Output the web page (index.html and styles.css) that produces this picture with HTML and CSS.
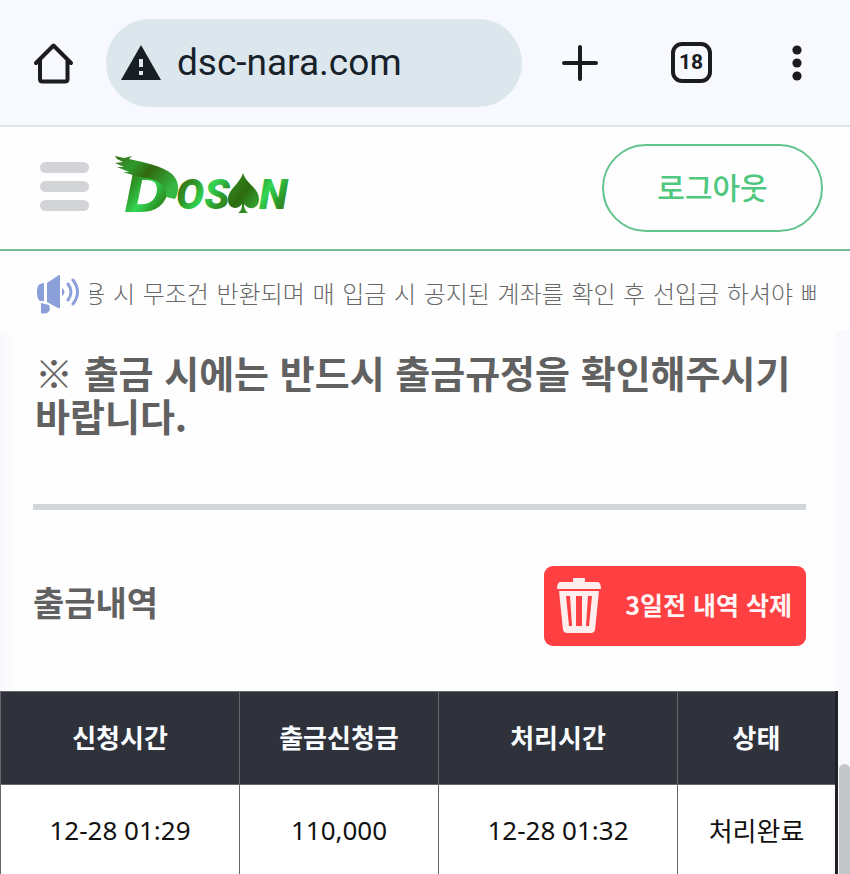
FILE: index.html
```html
<!DOCTYPE html>
<html lang="ko">
  <head>
    <meta charset="utf-8">
    <meta name="viewport" content="width=device-width, initial-scale=1">
    <title>DOSAN</title>
    <link rel="stylesheet" href="styles.css">
  </head>
  <body>
    <div class="browser-bar">
      <button class="home-button" aria-label="Home">
        <svg width="42" height="42" viewBox="0 0 42 42" fill="none" stroke="#1b1c20" stroke-width="4" stroke-linecap="round" stroke-linejoin="round">
          <path d="M4 21 21.500 3.500 39 21M8 18V37q0 2.500 2.500 2.500H33q2.500 0 2.500-2.500V18" />
        </svg>
      </button>
      <div class="address">
        <svg width="40" height="36" viewBox="0 0 40 36">
          <path fill="#171e24" d="M20 0 40 35H0z" />
          <path fill="#dce7ed" d="M18 14h4v8h-4zM18 26h4v4h-4z" />
        </svg>
        <span>dsc-nara.com</span>
      </div>
      <button class="new-tab" aria-label="New tab">
        <svg width="36" height="36" viewBox="0 0 36 36" stroke="#1b1c20" stroke-width="4" stroke-linecap="round">
          <path d="M18 2v32M2 18h32" />
        </svg>
      </button>
      <button class="tabs" aria-label="Tabs"><span class="tab-count">18</span></button>
      <button class="more" aria-label="More">
        <svg width="10" height="36" viewBox="0 0 10 36" fill="#1b1c20">
          <circle cx="5" cy="5" r="4.600" />
          <circle cx="5" cy="18" r="4.600" />
          <circle cx="5" cy="31" r="4.600" />
        </svg>
      </button>
    </div>

    <header class="site-header">
      <button class="menu-button" aria-label="Menu">
        <i></i>
        <i></i>
        <i></i>
      </button>
      <a class="logo" href="#" aria-label="DOSAN">
        <svg width="178" height="62" viewBox="0 0 178 62">
          <defs>
            <linearGradient id="leaf" gradientUnits="userSpaceOnUse" x1="0" y1="0" x2="20" y2="14" spreadMethod="reflect">
              <stop offset="0" stop-color="#34d653" />
              <stop offset="0.6" stop-color="#2c9a2a" />
              <stop offset="1" stop-color="#3a7a18" />
            </linearGradient>
            <linearGradient id="brush" x1="0" y1="0" x2="1" y2="0.6">
              <stop offset="0" stop-color="#3d6f1c" />
              <stop offset="0.3" stop-color="#2f9a2c" />
              <stop offset="0.55" stop-color="#33690f" />
              <stop offset="1" stop-color="#34b843" />
            </linearGradient>
            <linearGradient id="spade" x1="0" y1="0" x2="1" y2="1">
              <stop offset="0" stop-color="#39961f" />
              <stop offset="0.5" stop-color="#2c6a10" />
              <stop offset="1" stop-color="#36b53b" />
            </linearGradient>
          </defs>
          <g fill="url(#leaf)">
            <text class="logo-initial" x="10" y="57">D</text>
            <text class="logo-text" x="62" y="54">OS</text>
            <text class="logo-text" x="145" y="54">N</text>
          </g>
          <!-- brush stroke over the initial -->
          <path fill="url(#brush)" d="M1 1 10 3 18 1 15 4C29 7 49 11 58 19 65 26 66 35 61 44L52 42C53 33 47 27 37 24 27 22 17 20 9 17L15 17 3 12 10 12 1 8 9 7 3 4z" />
          <path fill="url(#spade)" d="M129 18C133 30 145 33 145 44 145 54 135 56 130 49 130 54 132 56 134 58H124C127 56 128 54 128 49 123 56 114 53 114 45 114 34 125 30 129 18z" />
        </svg>
      </a>
      <button class="logout"><span>로그아웃</span></button>
    </header>

    <div class="notice-bar">
      <svg width="44" height="40" viewBox="0 0 44 40" fill="#8b9fd9">
        <path d="M23 0Q24 0 24 1V32Q24 34 22 33L11 27V8zM8 8V26H4Q1 24 1 17T4 9zM5 28 13 30 14 35Q11 40 5 38z" />
        <path d="M26 13Q31 17 26 21z" />
        <path d="M32 9Q38 17 32 25M37 5Q46 17 37 29" fill="none" stroke="#8b9fd9" stroke-width="3" stroke-linecap="round" />
      </svg>
      <div class="notice-track">
        <span>용 시 무조건 반환되며 매 입금 시 공지된 계좌를 확인 후 선입금 하셔야 빠</span>
      </div>
    </div>

    <main class="content">
      <p class="warning">※ 출금 시에는 반드시 출금규정을 확인해주시기 바랍니다.</p>

      <div class="history-head">
        <h2>출금내역</h2>
        <button class="delete-button">
          <svg width="46" height="56" viewBox="0 0 46 56" fill="#ffeeee">
            <path d="M17 4V1Q17 0 18 0H28Q29 0 29 1V4H42Q45 5 45 11H1Q1 5 4 4z" />
            <path fill-rule="evenodd" d="M3 13H43L39 52Q38 55 35 55H11Q8 55 7 52zM10 18 13 48H16L14 18zM20 18V48H26V18zM32 18 30 48H33L36 18z" />
          </svg>
          <span>3일전 내역 삭제</span>
        </button>
      </div>

      <table class="history">
        <thead>
          <tr>
            <th class="col-time">신청시간</th>
            <th class="col-amount">출금신청금</th>
            <th class="col-time">처리시간</th>
            <th>상태</th>
          </tr>
        </thead>
        <tbody>
          <tr>
            <td>12-28 01:29</td>
            <td>110,000</td>
            <td>12-28 01:32</td>
            <td>처리완료</td>
          </tr>
        </tbody>
      </table>
    </main>
    <div class="scroll-thumb"></div>
  </body>
</html>
```

FILE: styles.css
```css
* {
  box-sizing: border-box;
}
body {
  margin: 0;
  height: 100vh;
  overflow: hidden;
  position: relative;
  display: flex;
  flex-direction: column;
  background-color: #fefefe;
  color: #616161;
  font-family: "Noto Sans CJK KR", sans-serif;
}
button {
  border: 0;
  padding: 0;
  background: none;
  font-family: inherit;
  display: flex;
  align-items: center;
  justify-content: center;
}
svg {
  display: block;
  flex-shrink: 0;
}

/* browser toolbar */
.browser-bar {
  flex-shrink: 0;
  display: flex;
  align-items: center;
  height: 127px;
  padding-left: 32px;
  background-color: #f8f9fe;
  border-bottom: 2px solid #dfe2e7;
}
.home-button {
  margin-right: 32px;
}
.address {
  flex: 1;
  display: flex;
  align-items: center;
  gap: 16px;
  height: 88px;
  padding-left: 15px;
  border-radius: 44px;
  background-color: #dce7ed;
  color: #17212a;
  font-family: Roboto, sans-serif;
  font-size: 37px;
}
.new-tab {
  width: 116px;
}
.tabs,
.more {
  width: 106px;
}
.tab-count {
  width: 41px;
  height: 41px;
  border: 4px solid #1b1c20;
  border-radius: 11px;
  color: #1b1c20;
  font-family: Roboto, sans-serif;
  font-size: 21px;
  font-weight: bold;
  line-height: 33px;
}

/* site header */
.site-header {
  flex-shrink: 0;
  display: flex;
  align-items: center;
  height: 124px;
  padding: 0 27px 0 40px;
  border-bottom: 2px solid #79bc99;
}
.menu-button {
  flex-direction: column;
  gap: 8px;
  margin-right: 25px;
  padding-bottom: 4px;
}
.menu-button i {
  width: 49px;
  height: 11px;
  border-radius: 6px;
  background-color: #d2d4d7;
}
.logo {
  padding-bottom: 4px;
}
.logo-initial {
  font-family: "DejaVu Sans", sans-serif;
  font-size: 56px;
  font-weight: bold;
  font-style: italic;
}
.logo-text {
  font-family: "Liberation Sans Narrow", Roboto, sans-serif;
  font-size: 42px;
  font-weight: 900;
  font-style: italic;
}
.logout {
  width: 221px;
  height: 88px;
  margin-left: auto;
  border: 2px solid #62c38d;
  border-radius: 44px;
  color: #50c77e;
  font-size: 30px;
  font-weight: 500;
}
.logout span,
.delete-button span {
  padding-bottom: 5px;
}

/* notice */
.notice-bar {
  flex-shrink: 0;
  display: flex;
  align-items: center;
  gap: 10px;
  height: 80px;
  padding: 8px 34px 0 36px;
}
.notice-track {
  flex: 1;
  display: flex;
  justify-content: center;
  overflow: hidden;
  white-space: nowrap;
  color: #686868;
  font-family: "DejaVu Sans", "Noto Sans CJK KR", sans-serif;
  font-size: 24px;
  font-weight: 300;
  line-height: 40px;
}

.content {
  flex: 1;
  min-height: 0;
  overflow: hidden;
  padding-top: 19px;
  background: linear-gradient(to right, #f9f7fc, #fefefe 16px, #fefefe calc(100% - 16px), #f8f8fd calc(100% - 12px));
}
.warning {
  margin: 0 44px 0 33px;
  padding: 0 0 68px 2px;
  border-bottom: 6px solid #d2d6da;
  font-size: 38px;
  font-weight: bold;
  line-height: 43px;
}
.history-head {
  display: flex;
  align-items: center;
  justify-content: space-between;
  padding: 56px 44px 45px 33px;
}
.history-head h2 {
  margin: 0;
  padding-bottom: 8px;
  font-size: 34px;
  line-height: 48px;
}
.delete-button {
  gap: 23px;
  height: 80px;
  padding: 0 14px 0 12px;
  border-radius: 9px;
  background-color: #ff4042;
  color: #fff5f5;
  font-size: 25px;
  font-weight: bold;
}
.history {
  width: calc(100% - 12px);
  table-layout: fixed;
  border-collapse: collapse;
  border-right: 3px solid #202227;
  background-color: #fff;
  color: #111;
  font-family: "Noto Sans", "Noto Sans CJK KR", sans-serif;
  font-size: 26px;
}
.history th,
.history td {
  height: 93px;
  padding: 0 0 2px;
  border: 1px solid #65676b;
  text-align: center;
}
.history th {
  background-color: #2f323a;
  color: #fafdff;
}
.col-time {
  width: 239px;
}
.col-amount {
  width: 199px;
}

.scroll-thumb {
  position: absolute;
  top: 764px;
  right: 0;
  bottom: 0;
  width: 11px;
  border-top-left-radius: 6px;
  border-top-right-radius: 6px;
  background-color: #c5c6ca;
}
```
